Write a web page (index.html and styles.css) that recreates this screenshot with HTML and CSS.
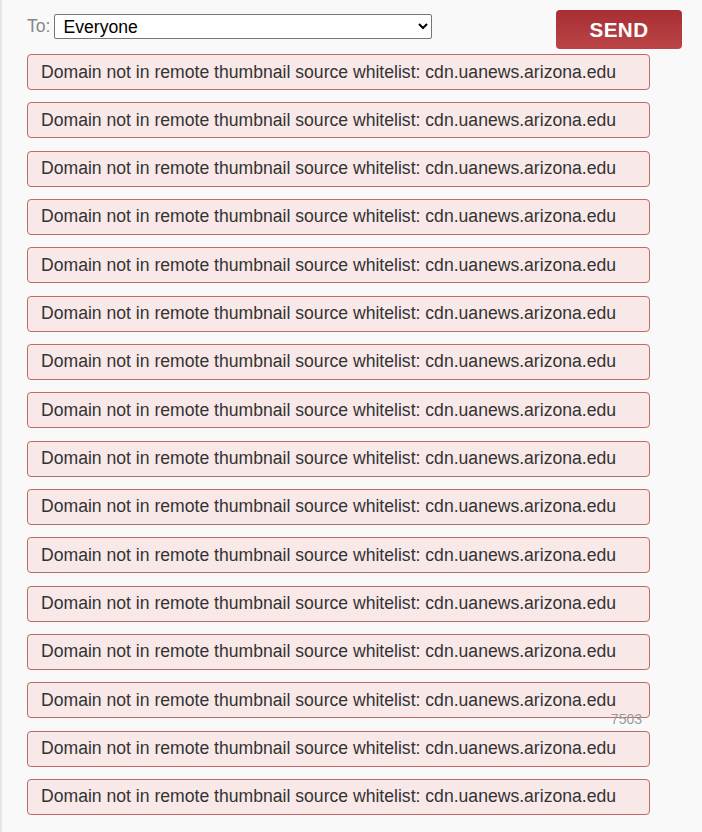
FILE: index.html
```html
<!DOCTYPE html>
<html>
<head>
<meta charset="utf-8">
<link rel="stylesheet" href="styles.css">
</head>
<body>
<div class="page">
  <div class="topbar">
    <div class="to">
      <label class="to-label">To:</label>
      <select class="to-select"><option>Everyone</option></select>
    </div>
    <button class="send">SEND</button>
  </div>
  <div class="list">
    <div class="err">Domain not in remote thumbnail source whitelist: cdn.uanews.arizona.edu</div>
    <div class="err">Domain not in remote thumbnail source whitelist: cdn.uanews.arizona.edu</div>
    <div class="err">Domain not in remote thumbnail source whitelist: cdn.uanews.arizona.edu</div>
    <div class="err">Domain not in remote thumbnail source whitelist: cdn.uanews.arizona.edu</div>
    <div class="err">Domain not in remote thumbnail source whitelist: cdn.uanews.arizona.edu</div>
    <div class="err">Domain not in remote thumbnail source whitelist: cdn.uanews.arizona.edu</div>
    <div class="err">Domain not in remote thumbnail source whitelist: cdn.uanews.arizona.edu</div>
    <div class="err">Domain not in remote thumbnail source whitelist: cdn.uanews.arizona.edu</div>
    <div class="err">Domain not in remote thumbnail source whitelist: cdn.uanews.arizona.edu</div>
    <div class="err">Domain not in remote thumbnail source whitelist: cdn.uanews.arizona.edu</div>
    <div class="err">Domain not in remote thumbnail source whitelist: cdn.uanews.arizona.edu</div>
    <div class="err">Domain not in remote thumbnail source whitelist: cdn.uanews.arizona.edu</div>
    <div class="err">Domain not in remote thumbnail source whitelist: cdn.uanews.arizona.edu</div>
    <div class="err">Domain not in remote thumbnail source whitelist: cdn.uanews.arizona.edu</div>
    <div class="err">Domain not in remote thumbnail source whitelist: cdn.uanews.arizona.edu</div>
    <div class="err">Domain not in remote thumbnail source whitelist: cdn.uanews.arizona.edu</div>
    <span class="counter">7503</span>
  </div>
</div>
</body>
</html>
```
FILE: styles.css
```css
html, body {
  margin: 0;
  padding: 0;
  background: #f9f9f9;
  height: 100%;
}
body {
  font-family: "Liberation Sans", Arial, sans-serif;
  color: #333;
}
.page {
  min-height: 100%;
  box-sizing: border-box;
  border-left: 2px solid #e6e6ee;
  padding: 10px 20px 0 25px;
}
.topbar {
  display: flex;
  justify-content: space-between;
  align-items: flex-start;
  width: 655px;
  height: 44px;
}
.to {
  display: flex;
  align-items: center;
  gap: 4px;
  margin-top: 4px;
}
.to-label {
  font-size: 17.6px;
  color: #888;
}
.to-select {
  width: 378px;
  height: 25px;
  font-family: "Liberation Sans", Arial, sans-serif;
  font-size: 17.6px;
  color: #000;
  background: #fff;
  border: 1px solid #767676;
  border-radius: 2px;
  padding: 0 4px;
}
.send {
  width: 126px;
  height: 39px;
  border: none;
  border-radius: 4px;
  background: linear-gradient(#a72f34, #bb4447);
  color: #fff;
  font-family: "Liberation Sans", Arial, sans-serif;
  font-weight: bold;
  font-size: 20.6px;
  letter-spacing: 0.5px;
  padding: 0;
}
.list {
  position: relative;
  width: 623px;
}
.err {
  box-sizing: border-box;
  height: 36px;
  margin-bottom: 12.33px;
  padding: 0 13px;
  display: flex;
  align-items: center;
  background: #f8e8e8;
  border: 1px solid #c06a68;
  border-radius: 4px;
  font-size: 17.6px;
  color: #333;
  white-space: nowrap;
}
.counter {
  position: absolute;
  right: 8px;
  top: 657px;
  font-size: 14px;
  color: #999;
}
```
